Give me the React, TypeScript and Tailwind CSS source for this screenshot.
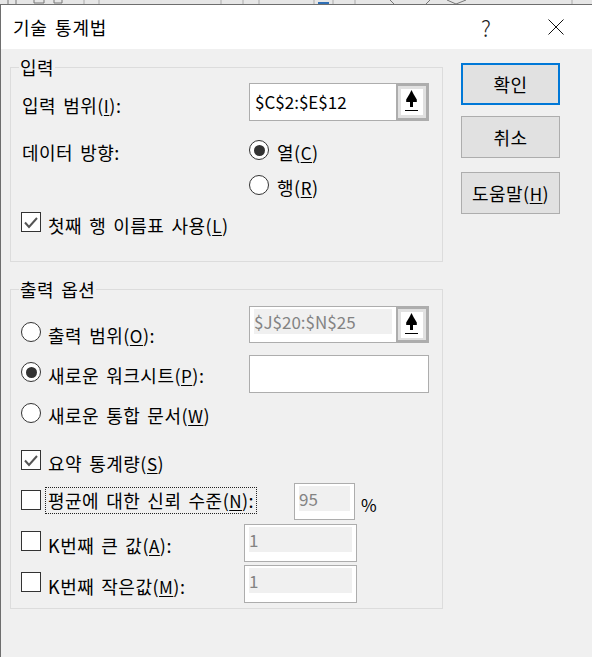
import React from "react";

const Mn: React.FC<{ children: string }> = ({ children }) => (
  <span className="text-[17px] underline underline-offset-2 decoration-1">{children}</span>
);

// hangul labels run wider than Noto's default spacing
const Label: React.FC<{ children: React.ReactNode; className?: string }> = ({ children, className = "" }) => (
  <span className={`text-[18px] leading-[24px] tracking-[0.5px] [word-spacing:2.500px] whitespace-nowrap ${className}`}>
    {children}
  </span>
);

const Arrow = () => (
  <svg width="22" height="26" viewBox="0 0 22 26" className="block">
    <path d="M10.500 1 L12.500 5 L15.800 10.500 V13 H12 V18 H9 V13 H5.200 V10.500 L8.500 5 Z" fill="#000" />
    <rect x="4" y="21" width="13" height="1" fill="#000" />
  </svg>
);

const RefButton = () => (
  <div className="w-[32px] shrink-0 self-stretch bg-[#e1e1e1] border-[2px] border-[#adadad] flex items-center justify-center">
    <div className="w-[22px] h-[26px] bg-white">
      <Arrow />
    </div>
  </div>
);

const Radio: React.FC<{ checked?: boolean; className?: string }> = ({ checked, className = "" }) => (
  <div className={`w-[20px] h-[20px] shrink-0 rounded-full bg-white border border-[#333333] flex items-center justify-center ${className}`}>
    {checked && <div className="w-[11px] h-[11px] rounded-full bg-[#333333]" />}
  </div>
);

const Check: React.FC<{ checked?: boolean; className?: string }> = ({ checked, className = "" }) => (
  <div className={`w-[20px] h-[20px] shrink-0 bg-white border border-[#333333] ${className}`}>
    {checked && (
      <svg width="18" height="18" viewBox="0 0 18 18" className="block">
        <path d="M3 9.500 L7 14 L15 5" fill="none" stroke="#555555" strokeWidth="2" />
      </svg>
    )}
  </div>
);

const DisabledInput: React.FC<{ value: string; className: string }> = ({ value, className }) => (
  <div className={`shrink-0 bg-white border border-[#adadad] px-[4px] pt-[2px] ${className}`}>
    <div className="bg-[#f0f0f0] text-[#838383] text-[17px] h-[25px] leading-[25px]">{value}</div>
  </div>
);

const Legend: React.FC<{ children: string }> = ({ children }) => (
  <span className="absolute left-[8px] top-[-13px] bg-[#f0f0f0] px-[1px]">
    <Label>{children}</Label>
  </span>
);

export default function App() {
  return (
    <div
      className="w-[592px] h-[657px] overflow-hidden bg-[#e6e6e6] text-black"
      style={{ fontFamily: '"Noto Sans CJK KR", "Liberation Sans", sans-serif' }}
    >
      {/* bit of the worksheet behind the dialog */}
      <svg width="592" height="4" viewBox="0 0 592 4" className="block">
        <path
          d="M84 0V4 M99 0V4 M221 0V4 M243 0V4 M259 0V4 M314 0V4 M333 0V4 M355 0V4 M572 0V4"
          stroke="#aaaaaa"
          fill="none"
        />
        <path d="M8 0V4 M16 0V4 M34 0V3 H44 V0 M54 0V3 H62 V0 M390 0 L394 4 M430 0 L426 4 M447 0 L456 4 L466 0" stroke="#777777" fill="none" />
        <rect x="318" y="2" width="11" height="2" fill="#2f6fb5" />
      </svg>
      <div className="h-[653px] border-t border-l border-[#6e6e6e] bg-[#f0f0f0]">
        {/* title bar */}
        <div className="h-[44px] bg-white flex items-center pl-[12px] pr-[28px]">
          <Label className="flex-1 tracking-[0.8px] [word-spacing:0px]">기술 통계법</Label>
          <span className="text-[22px] font-light text-[#222222] mr-[57px]">?</span>
          <svg width="16" height="16" viewBox="0 0 16 16">
            <path d="M0.500 0.500 L15.500 15.500 M15.500 0.500 L0.500 15.500" stroke="#111111" strokeWidth="1" />
          </svg>
        </div>

        <div className="flex pl-[9px]">
          <div className="w-[433px]">
            {/* 입력 */}
            <div className="relative mt-[18px] h-[195px] border border-[#dcdcdc] pl-[11px] pr-[13px]">
              <Legend>입력</Legend>
              <div className="flex items-center justify-between mt-[15px] h-[38px]">
                <Label className="pt-[6px]">
                  입력 범위(<Mn>I</Mn>):
                </Label>
                <div className="w-[180px] h-[38px] flex bg-white border border-[#adadad]">
                  <span className="flex-1 pl-[5px] text-[17px] leading-[36px]">$C$2:$E$12</span>
                  <RefButton />
                </div>
              </div>
              <div className="flex mt-[19px]">
                <Label className="w-[227px]">데이터 방향:</Label>
                <div className="flex flex-col gap-[11px]">
                  <div className="flex gap-[8px] h-[24px]">
                    <Radio checked />
                    <Label>
                      열(<Mn>C</Mn>)
                    </Label>
                  </div>
                  <div className="flex gap-[8px] h-[24px]">
                    <Radio />
                    <Label>
                      행(<Mn>R</Mn>)
                    </Label>
                  </div>
                </div>
              </div>
              <div className="flex gap-[7px] mt-[13px] -ml-[1px]">
                <Check checked />
                <Label className="mt-[1px]">
                  첫째 행 이름표 사용(<Mn>L</Mn>)
                </Label>
              </div>
            </div>

            {/* 출력 옵션 */}
            <div className="relative mt-[27px] h-[320px] border border-[#dcdcdc] pl-[10px] pr-[13px]">
              <Legend>출력 옵션</Legend>
              <div className="flex justify-between mt-[16px] h-[37px]">
                <div className="flex gap-[7px]">
                  <Radio className="mt-[16px]" />
                  <Label className="mt-[17px]">
                    출력 범위(<Mn>O</Mn>):
                  </Label>
                </div>
                <div className="w-[180px] h-[37px] flex bg-white border border-[#adadad]">
                  <div className="flex-1 px-[4px] pt-[2px]">
                    <div className="bg-[#f0f0f0] text-[#838383] text-[17px] h-[25px] leading-[25px]">$J$20:$N$25</div>
                  </div>
                  <RefButton />
                </div>
              </div>
              <div className="flex justify-between mt-[12px] h-[38px]">
                <div className="flex gap-[7px]">
                  <Radio checked className="mt-[7px]" />
                  <Label className="mt-[8px]">
                    새로운 워크시트(<Mn>P</Mn>):
                  </Label>
                </div>
                <div className="w-[180px] h-[38px] bg-white border border-[#adadad]" />
              </div>
              <div className="flex gap-[7px] mt-[10px] h-[24px]">
                <Radio />
                <Label>
                  새로운 통합 문서(<Mn>W</Mn>)
                </Label>
              </div>
              <div className="flex gap-[7px] mt-[23px] h-[24px]">
                <Check checked />
                <Label className="mt-[1px]">
                  요약 통계량(<Mn>S</Mn>)
                </Label>
              </div>
              <div className="flex mt-[9px] h-[37px]">
                <Check className="mt-[7px]" />
                <div className="ml-[4px] mt-[4px] w-[212px] h-[27px] px-[3px] outline-1 -outline-offset-1 outline-dotted outline-[#222222]">
                  <Label className="block pt-[1px]">
                    평균에 대한 신뢰 수준(<Mn>N</Mn>):
                  </Label>
                </div>
                <DisabledInput value="95" className="ml-[37px] w-[61px] h-[37px]" />
                <span className="ml-[6px] mt-[10px] text-[17px] leading-[24px]">%</span>
              </div>
              <div className="flex mt-[4px] h-[38px]">
                <Check className="mt-[7px]" />
                <Label className="ml-[7px] mt-[9px] w-[196px]">
                  K번째 큰 값(<Mn>A</Mn>):
                </Label>
                <DisabledInput value="1" className="w-[113px] h-[38px]" />
              </div>
              <div className="flex mt-[3px] h-[38px]">
                <Check className="mt-[7px]" />
                <Label className="ml-[7px] mt-[9px] w-[196px]">
                  K번째 작은값(<Mn>M</Mn>):
                </Label>
                <DisabledInput value="1" className="w-[113px] h-[38px]" />
              </div>
            </div>
          </div>

          {/* buttons */}
          <div className="ml-[18px] w-[99px] flex flex-col mt-[14px]">
            <button className="h-[42px] bg-[#e1e1e1] border-[2px] border-[#0078d7]">
              <Label>확인</Label>
            </button>
            <button className="h-[42px] mt-[11px] bg-[#e1e1e1] border border-[#adadad]">
              <Label>취소</Label>
            </button>
            <button className="h-[42px] mt-[14px] bg-[#e1e1e1] border border-[#adadad]">
              <Label className="tracking-[0.3px]">
                도움말(<Mn>H</Mn>)
              </Label>
            </button>
          </div>
        </div>
      </div>
    </div>
  );
}
